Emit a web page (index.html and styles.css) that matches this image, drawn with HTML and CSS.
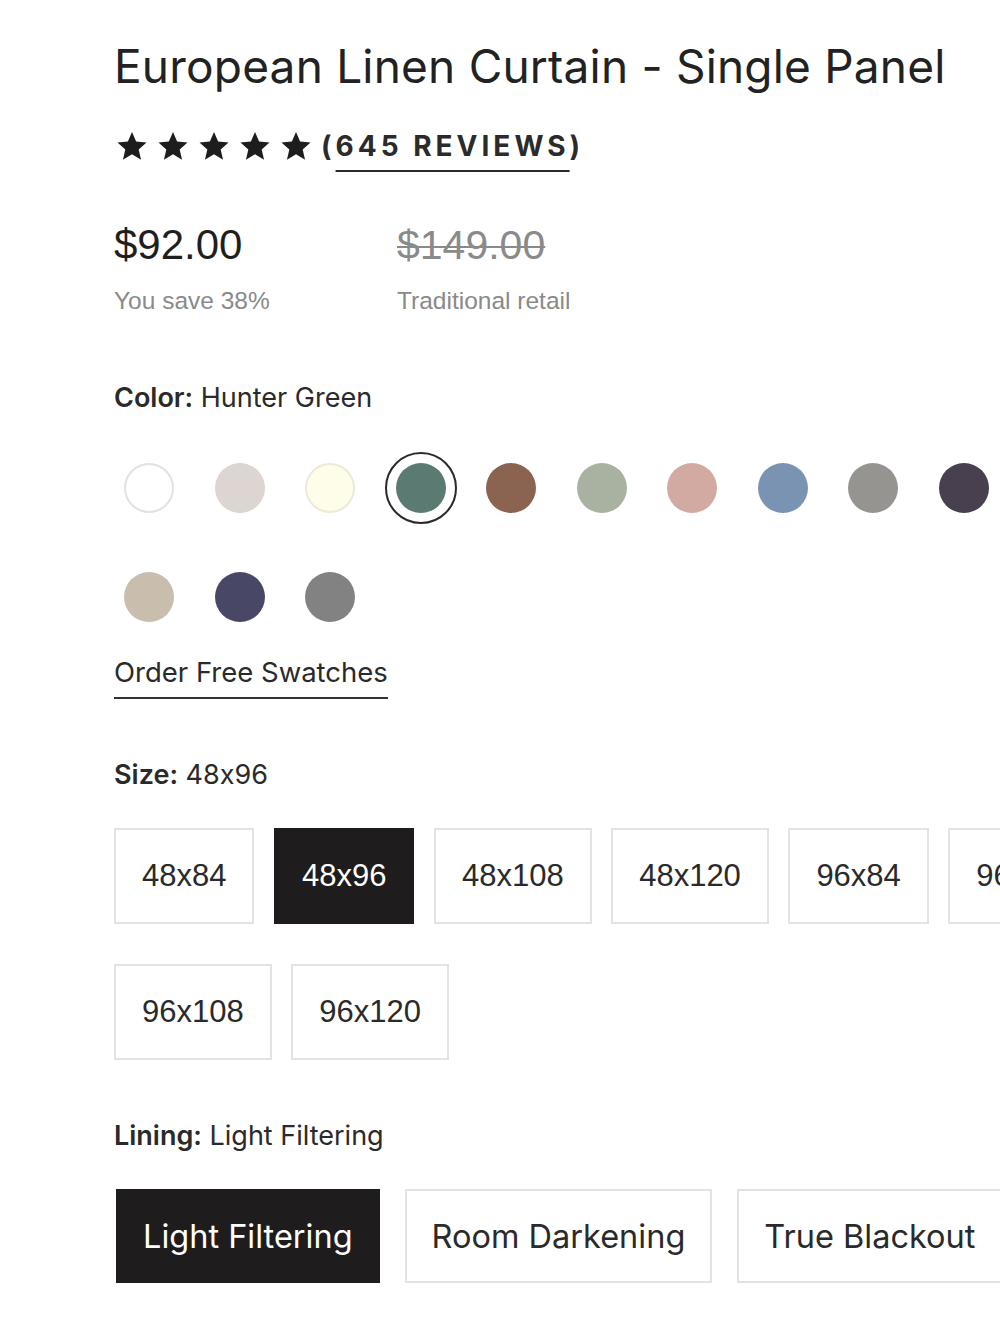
FILE: index.html
```html
<!DOCTYPE html>
<html lang="en">
<head>
<meta charset="utf-8">
<title>European Linen Curtain - Single Panel</title>
<link rel="stylesheet" href="styles.css">
</head>
<body>
<main class="product">
  <h1 class="title">European Linen Curtain - Single Panel</h1>

  <div class="rating">
    <div class="stars">
      <svg class="star" viewBox="0 0 24 24"><path d="M12 1.5l3.1 7.2 7.8.7-5.9 5.2 1.8 7.7L12 18.2l-6.8 4.1 1.8-7.7L1.1 9.4l7.8-.7z"/></svg>
      <svg class="star" viewBox="0 0 24 24"><path d="M12 1.5l3.1 7.2 7.8.7-5.9 5.2 1.8 7.7L12 18.2l-6.8 4.1 1.8-7.7L1.1 9.4l7.8-.7z"/></svg>
      <svg class="star" viewBox="0 0 24 24"><path d="M12 1.5l3.1 7.2 7.8.7-5.9 5.2 1.8 7.7L12 18.2l-6.8 4.1 1.8-7.7L1.1 9.4l7.8-.7z"/></svg>
      <svg class="star" viewBox="0 0 24 24"><path d="M12 1.5l3.1 7.2 7.8.7-5.9 5.2 1.8 7.7L12 18.2l-6.8 4.1 1.8-7.7L1.1 9.4l7.8-.7z"/></svg>
      <svg class="star" viewBox="0 0 24 24"><path d="M12 1.5l3.1 7.2 7.8.7-5.9 5.2 1.8 7.7L12 18.2l-6.8 4.1 1.8-7.7L1.1 9.4l7.8-.7z"/></svg>
    </div>
    <a class="reviews" href="#">(<span class="reviews-link">645 REVIEWS</span>)</a>
  </div>

  <div class="prices">
    <div class="price-col">
      <div class="price">$92.00</div>
      <div class="price-note">You save 38%</div>
    </div>
    <div class="price-col">
      <div class="price price-old">$149.00</div>
      <div class="price-note">Traditional retail</div>
    </div>
  </div>

  <section class="option option-color">
    <div class="option-label"><b>Color:</b> Hunter Green</div>
    <div class="swatches">
      <span class="swatch"><span class="dot dot-white"></span></span>
      <span class="swatch"><span class="dot" style="background:#ddd5d1"></span></span>
      <span class="swatch"><span class="dot dot-cream"></span></span>
      <span class="swatch selected"><span class="dot" style="background:#5a7a72"></span></span>
      <span class="swatch"><span class="dot" style="background:#8b6351"></span></span>
      <span class="swatch"><span class="dot" style="background:#a9b2a1"></span></span>
      <span class="swatch"><span class="dot" style="background:#d3aaa1"></span></span>
      <span class="swatch"><span class="dot" style="background:#7a93b3"></span></span>
      <span class="swatch"><span class="dot" style="background:#959491"></span></span>
      <span class="swatch"><span class="dot" style="background:#483f4f"></span></span>
      <span class="swatch"><span class="dot" style="background:#c9bdad"></span></span>
      <span class="swatch"><span class="dot" style="background:#484766"></span></span>
      <span class="swatch"><span class="dot" style="background:#828282"></span></span>
    </div>
    <a class="swatch-link" href="#">Order Free Swatches</a>
  </section>

  <section class="option option-size">
    <div class="option-label"><b>Size:</b> 48x96</div>
    <div class="sizes">
      <button class="size">48x84</button>
      <button class="size active">48x96</button>
      <button class="size">48x108</button>
      <button class="size">48x120</button>
      <button class="size">96x84</button>
      <button class="size">96x96</button>
      <button class="size">96x108</button>
      <button class="size">96x120</button>
    </div>
  </section>

  <section class="option option-lining">
    <div class="option-label"><b>Lining:</b> Light Filtering</div>
    <div class="linings">
      <button class="lining active">Light Filtering</button>
      <button class="lining">Room Darkening</button>
      <button class="lining">True Blackout</button>
    </div>
  </section>
</main>
</body>
</html>
```

FILE: styles.css
```css
html, body {
  margin: 0;
  padding: 0;
  background: #fff;
  overflow-x: hidden;
}

body {
  font-family: Inter, "Liberation Sans", Arial, sans-serif;
  font-feature-settings: "calt" 0;
  color: #222;
}

.product {
  width: 975px;
  padding: 36px 0 40px 114px;
}

.title {
  margin: 0;
  font-size: 46px;
  font-weight: 400;
  line-height: 60px;
  letter-spacing: 0.2px;
  color: #222;
}

.rating {
  display: flex;
  align-items: center;
  margin-top: 30px;
  height: 40px;
}

.stars {
  display: flex;
  gap: 9px;
  padding-left: 2px;
}

.star {
  width: 32px;
  height: 32px;
  fill: #1d1d1d;
}

.reviews {
  margin-left: 9px;
  font-size: 28px;
  font-weight: 700;
  letter-spacing: 4px;
  color: #2b2b2b;
  text-decoration: none;
}

.reviews-link {
  text-decoration: underline;
  text-decoration-thickness: 2px;
  text-underline-offset: 14px;
}

.prices {
  display: flex;
  margin-top: 55px;
}

.price-col {
  width: 283px;
}

.price {
  font-family: "Liberation Sans", Arial, sans-serif;
  font-size: 42px;
  line-height: 48px;
  color: #1f1f1f;
}

.price-old {
  color: #8a8a8a;
  font-size: 41px;
  text-decoration: line-through;
  text-decoration-thickness: 2px;
}

.price-note {
  margin-top: 18px;
  font-family: "Liberation Sans", Arial, sans-serif;
  font-size: 24.5px;
  color: #8a8a8a;
}

.option-color {
  margin-top: 66px;
}

.option-size {
  margin-top: 59px;
}

.option-lining {
  margin-top: 59px;
}

.option-label {
  font-size: 27px;
  line-height: 34px;
  color: #2a2a2a;
}

.option-label b {
  font-weight: 600;
}

.swatches {
  display: flex;
  flex-wrap: wrap;
  column-gap: 18.5px;
  row-gap: 37px;
  margin-top: 37px;
  margin-left: -1px;
}

.swatch {
  width: 72px;
  height: 72px;
  display: flex;
  align-items: center;
  justify-content: center;
  border-radius: 50%;
  box-sizing: border-box;
}

.swatch.selected {
  border: 2px solid #2a2a2a;
}

.dot {
  width: 50px;
  height: 50px;
  border-radius: 50%;
  box-sizing: border-box;
}

.dot-white {
  background: #fff;
  border: 2px solid #e2e2e2;
}

.dot-cream {
  background: #fdfde9;
  border: 2px solid #ecebd8;
}

.swatch-link {
  display: inline-block;
  margin-top: 22px;
  padding-bottom: 8px;
  border-bottom: 2px solid #333;
  font-size: 27.5px;
  line-height: 34px;
  color: #2a2a2a;
  text-decoration: none;
}

.sizes {
  display: flex;
  flex-wrap: wrap;
  column-gap: 19.5px;
  row-gap: 40px;
  margin-top: 36px;
}

.size {
  height: 96px;
  padding: 0 26px;
  border: 2px solid #e3e3e3;
  background: #fff;
  font-family: "Liberation Sans", Arial, sans-serif;
  font-size: 31px;
  color: #2a2a2a;
}

.size.active {
  background: #1e1c1c;
  border-color: #1e1c1c;
  color: #fff;
}

.linings {
  display: flex;
  gap: 25px;
  margin-top: 36px;
  padding-left: 2px;
}

.lining {
  height: 94px;
  padding: 0 25px;
  border: 2px solid #e3e3e3;
  background: #fff;
  font-family: Inter, "Liberation Sans", Arial, sans-serif;
  font-size: 32.5px;
  color: #2a2a2a;
}

.lining.active {
  background: #1e1c1c;
  border-color: #1e1c1c;
  color: #fff;
}
```
